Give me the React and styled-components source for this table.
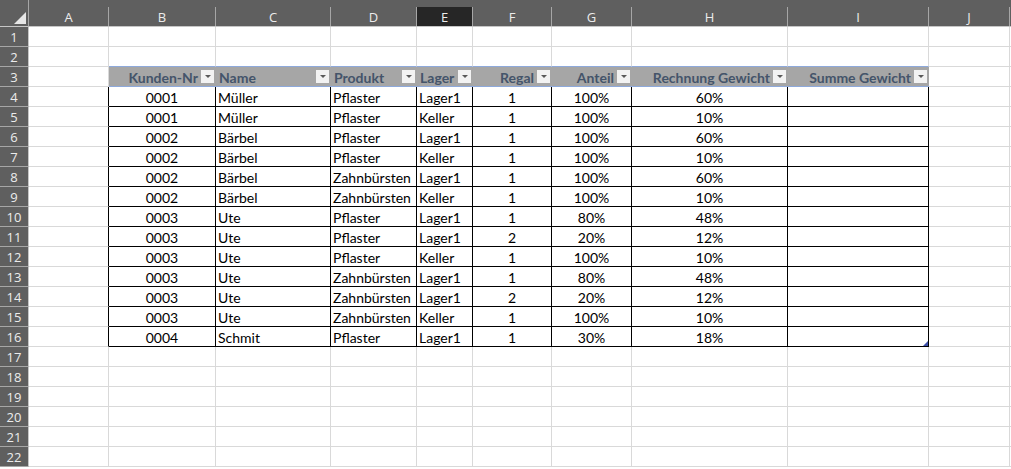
import React from 'react';
import styled, { createGlobalStyle } from 'styled-components';

const GlobalStyle = createGlobalStyle`
  html, body {
    margin: 0;
    padding: 0;
    background: #fff;
    overflow: hidden;
  }
`;

const GRID = '#d9d9d9';
const BLACK = '#000';
const BLUE = '#8ea9db';

const columns = [
  { key: 'A', width: 80 },
  { key: 'B', width: 107 },
  { key: 'C', width: 115 },
  { key: 'D', width: 86 },
  { key: 'E', width: 56, active: true },
  { key: 'F', width: 79 },
  { key: 'G', width: 80 },
  { key: 'H', width: 156 },
  { key: 'I', width: 141 },
  { key: 'J', width: 81 },
];

const headers = [
  { label: 'Kunden-Nr', align: 'right' },
  { label: 'Name', align: 'left' },
  { label: 'Produkt', align: 'left' },
  { label: 'Lager', align: 'left' },
  { label: 'Regal', align: 'right' },
  { label: 'Anteil', align: 'right' },
  { label: 'Rechnung Gewicht', align: 'right' },
  { label: 'Summe Gewicht', align: 'right' },
];

const dataAlign = ['center', 'left', 'left', 'left', 'center', 'center', 'center', 'left'];

const rows = [
  ['0001', 'Müller', 'Pflaster', 'Lager1', '1', '100%', '60%', ''],
  ['0001', 'Müller', 'Pflaster', 'Keller', '1', '100%', '10%', ''],
  ['0002', 'Bärbel', 'Pflaster', 'Lager1', '1', '100%', '60%', ''],
  ['0002', 'Bärbel', 'Pflaster', 'Keller', '1', '100%', '10%', ''],
  ['0002', 'Bärbel', 'Zahnbürsten', 'Lager1', '1', '100%', '60%', ''],
  ['0002', 'Bärbel', 'Zahnbürsten', 'Keller', '1', '100%', '10%', ''],
  ['0003', 'Ute', 'Pflaster', 'Lager1', '1', '80%', '48%', ''],
  ['0003', 'Ute', 'Pflaster', 'Lager1', '2', '20%', '12%', ''],
  ['0003', 'Ute', 'Pflaster', 'Keller', '1', '100%', '10%', ''],
  ['0003', 'Ute', 'Zahnbürsten', 'Lager1', '1', '80%', '48%', ''],
  ['0003', 'Ute', 'Zahnbürsten', 'Lager1', '2', '20%', '12%', ''],
  ['0003', 'Ute', 'Zahnbürsten', 'Keller', '1', '100%', '10%', ''],
  ['0004', 'Schmit', 'Pflaster', 'Lager1', '1', '30%', '18%', ''],
];

const ROW_COUNT = 22;
const HEAD_ROW = 3;
const FIRST_DATA = 4;
const LAST_DATA = FIRST_DATA + rows.length - 1;

function App() {
  const cells = [];

  for (let r = 1; r <= ROW_COUNT; r++) {
    cells.push(<RowHead key={`rh${r}`}>{r}</RowHead>);
    const inData = r >= FIRST_DATA && r <= LAST_DATA;

    columns.forEach((col, c) => {
      const inTable = c >= 1 && c <= 8;
      const key = `${col.key}${r}`;

      if (r === HEAD_ROW && inTable) {
        const h = headers[c - 1];
        cells.push(
          <HeadCell key={key}>
            <HeadLabel $align={h.align}>{h.label}</HeadLabel>
            <FilterButton />
          </HeadCell>
        );
        return;
      }

      if (inData && inTable) {
        const isLast = r === LAST_DATA && c === 8;
        cells.push(
          <Cell key={key} $right={BLACK} $bottom={BLACK} $align={dataAlign[c - 1]}>
            {rows[r - FIRST_DATA][c - 1]}
            {isLast && <ResizeHandle />}
          </Cell>
        );
        return;
      }

      let right = GRID;
      let bottom = GRID;
      if (c === 0 && inData) right = BLACK;
      if (r === HEAD_ROW - 1 && inTable) bottom = BLUE;
      if (r === LAST_DATA && inTable) bottom = BLACK;
      cells.push(<Cell key={key} $right={right} $bottom={bottom} />);
    });

    cells.push(<Cell key={`K${r}`} $right={GRID} $bottom={GRID} />);
  }

  return (
    <>
      <GlobalStyle />
      <Sheet>
        <Corner>
          <CornerMark />
        </Corner>
        {columns.map((col) => (
          <ColHead key={col.key}>
            <ColLetter $active={col.active}>{col.key}</ColLetter>
          </ColHead>
        ))}
        <ColHead>
          <ColLetter />
        </ColHead>
        {cells}
      </Sheet>
    </>
  );
}

export default App;

const Sheet = styled.div`
  display: grid;
  grid-template-columns: 29px ${columns.map((c) => `${c.width}px`).join(' ')} 1fr;
  grid-template-rows: 27px repeat(${ROW_COUNT}, 20px);
  width: 1011px;
  height: 469px;
  overflow: hidden;
  font-family: Lato, 'Liberation Sans', sans-serif;
  font-size: 14px;
  color: #000;
`;

const Corner = styled.div`
  background: #5f5f5f;
  border-right: 1px solid #a6a6a6;
  border-bottom: 1px solid #c6c6c6;
  box-sizing: border-box;
  display: flex;
  justify-content: flex-end;
  align-items: flex-end;
  padding: 0 2px 2px 0;
`;

const CornerMark = styled.div`
  width: 0;
  height: 0;
  border-left: 12px solid transparent;
  border-bottom: 12px solid #e6e6e6;
`;

const ColHead = styled.div`
  background: #5f5f5f;
  padding-top: 7px;
  box-sizing: border-box;
  border-bottom: 1px solid #c6c6c6;
`;

const ColLetter = styled.div`
  height: 100%;
  box-sizing: border-box;
  border-right: 1px solid #a6a6a6;
  background: ${(p) => (p.$active ? '#262626' : 'transparent')};
  color: #ececec;
  font-family: 'Open Sans', 'Noto Sans', sans-serif;
  font-size: 13px;
  display: flex;
  align-items: center;
  justify-content: center;
`;

const RowHead = styled.div`
  background: #5f5f5f;
  color: #ececec;
  font-family: 'Open Sans', 'Noto Sans', sans-serif;
  font-size: 13px;
  box-sizing: border-box;
  border-right: 1px solid #c6c6c6;
  border-bottom: 1px solid #a6a6a6;
  display: flex;
  align-items: center;
  justify-content: center;
`;

const Cell = styled.div`
  position: relative;
  box-sizing: border-box;
  border-right: 1px solid ${(p) => p.$right};
  border-bottom: 1px solid ${(p) => p.$bottom};
  padding: 1px 2px 0;
  line-height: 19px;
  white-space: nowrap;
  overflow: hidden;
  text-align: ${(p) => p.$align || 'left'};
`;

const HeadCell = styled.div`
  background: #a6a6a6;
  box-sizing: border-box;
  border-bottom: 1px solid ${BLUE};
  display: flex;
  align-items: center;
  gap: 3px;
  padding: 0 2px 0 3px;
  min-width: 0;
`;

const HeadLabel = styled.div`
  flex: 1;
  min-width: 0;
  text-align: ${(p) => p.$align};
  font-weight: 700;
  color: #44546a;
  white-space: nowrap;
  line-height: 19px;
  padding-top: 1px;
`;

const FilterButton = styled.div`
  flex: none;
  width: 13px;
  height: 13px;
  background: #f2f2f2;
  display: flex;
  align-items: center;
  justify-content: center;

  &::after {
    content: '';
    width: 0;
    height: 0;
    border-left: 3px solid transparent;
    border-right: 3px solid transparent;
    border-top: 3px solid #595959;
  }
`;

const ResizeHandle = styled.span`
  position: absolute;
  right: 0;
  bottom: 0;
  width: 0;
  height: 0;
  border-left: 5px solid transparent;
  border-bottom: 5px solid #3b4fa8;
`;
